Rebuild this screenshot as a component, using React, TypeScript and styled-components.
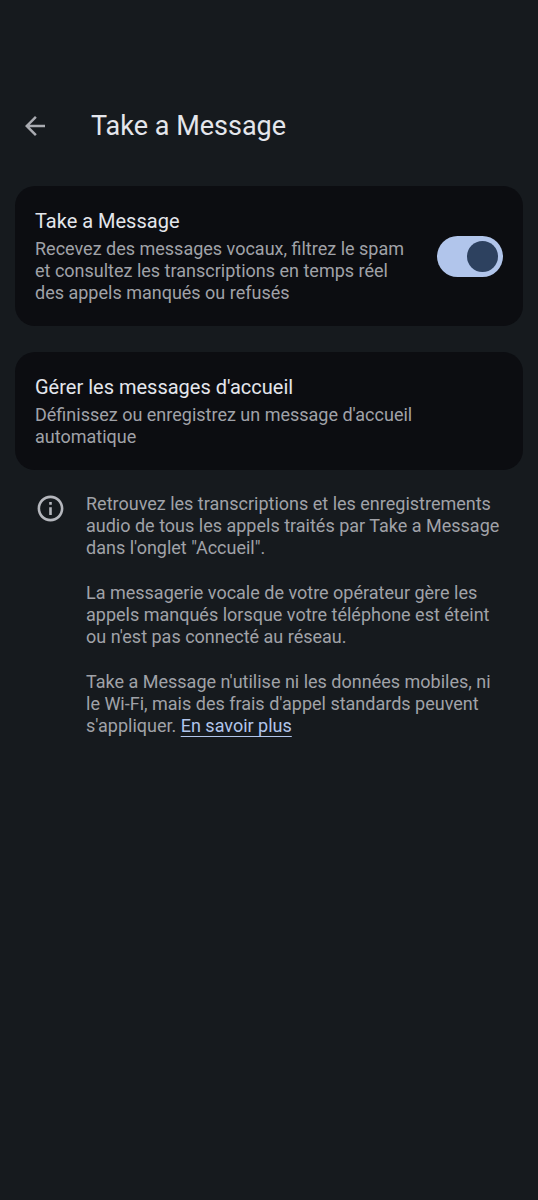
import React, { useState } from "react";
import styled, { createGlobalStyle } from "styled-components";

const GlobalStyle = createGlobalStyle`
  * { box-sizing: border-box; }
  body {
    margin: 0;
    background: #161a1e;
    color: #e4e6ec;
    font-family: Roboto, "Liberation Sans", sans-serif;
  }
`;

const Screen = styled.main`
  min-height: 100vh;
  padding: 102px 15px 24px;
`;

const TopBar = styled.header`
  display: flex;
  align-items: center;
  gap: 36px;
  height: 48px;
  margin-bottom: 36px;
`;

const BackButton = styled.button`
  display: flex;
  align-items: center;
  justify-content: center;
  width: 40px;
  height: 40px;
  padding: 0;
  border: 0;
  border-radius: 50%;
  background: none;
  color: #a9abb1;
  cursor: pointer;
`;

const PageTitle = styled.h1`
  margin: 0;
  font-size: 27px;
  line-height: 36px;
  font-weight: 400;
`;

const Card = styled.section`
  display: flex;
  align-items: center;
  gap: 24px;
  padding: 22px 20px;
  margin-bottom: 26px;
  border-radius: 20px;
  background: #0c0d11;
`;

const CardText = styled.div`
  flex: 1;
  min-width: 0;
`;

const CardTitle = styled.h2`
  display: block;
  margin: 0 0 4px;
  font-size: 20px;
  line-height: 26px;
  font-weight: 400;
`;

const Body = styled.p`
  margin: 0;
  font-size: 18px;
  line-height: 22px;
  color: #a0a2a8;
`;

const Switch = styled.input`
  appearance: none;
  display: flex;
  align-items: center;
  flex: none;
  width: 66px;
  height: 41px;
  margin: 0;
  padding: 5px;
  border-radius: 21px;
  background: #b1c5eb;
  cursor: pointer;

  &::before {
    content: "";
    width: 31px;
    height: 31px;
    border-radius: 50%;
    background: #2d415f;
  }

  &:checked {
    justify-content: flex-end;
  }
`;

const Info = styled.section`
  display: flex;
  gap: 20px;
  padding: 0 15px 0 20px;
  margin-top: -3px;
`;

const InfoIcon = styled.svg`
  flex: none;
  width: 31px;
  height: 31px;
  color: #b5b7bd;
`;

const InfoText = styled.div`
  display: flex;
  flex-direction: column;
  gap: 23px;
`;

const Link = styled.a`
  display: inline-block;
  color: #b1c5eb;
  text-decoration: underline;
  text-decoration-thickness: 1px;
  text-underline-offset: 4px;
`;

export default function App() {
  const [enabled, setEnabled] = useState(true);

  return (
    <>
      <GlobalStyle />
      <Screen>
        <TopBar>
          <BackButton type="button" aria-label="Retour">
            <svg width="30" height="30" viewBox="0 0 24 24" fill="currentColor" aria-hidden="true">
              <path d="M20 11H7.83l5.59-5.59L12 4l-8 8 8 8 1.41-1.41L7.83 13H20v-2z" />
            </svg>
          </BackButton>
          <PageTitle>Take a Message</PageTitle>
        </TopBar>

        <Card>
          <CardText>
            <CardTitle as="label" htmlFor="take-message">Take a Message</CardTitle>
            <Body id="take-message-help">
              Recevez des messages vocaux, filtrez le spam et consultez les
              transcriptions en temps réel des appels manqués ou refusés
            </Body>
          </CardText>
          <Switch
            id="take-message"
            type="checkbox"
            role="switch"
            aria-describedby="take-message-help"
            checked={enabled}
            onChange={(e) => setEnabled(e.target.checked)}
          />
        </Card>

        <Card>
          <CardText>
            <CardTitle>Gérer les messages d'accueil</CardTitle>
            <Body>Définissez ou enregistrez un message d'accueil automatique</Body>
          </CardText>
        </Card>

        <Info>
          <InfoIcon viewBox="0 0 24 24" fill="currentColor" aria-hidden="true">
            <path d="M11 7h2v2h-2zm0 4h2v6h-2zm1-9C6.48 2 2 6.48 2 12s4.48 10 10 10 10-4.48 10-10S17.52 2 12 2zm0 18c-4.41 0-8-3.59-8-8s3.59-8 8-8 8 3.59 8 8-3.59 8-8 8z" />
          </InfoIcon>
          <InfoText>
            <Body>
              Retrouvez les transcriptions et les enregistrements audio de tous
              les appels traités par Take a Message dans l'onglet "Accueil".
            </Body>
            <Body>
              La messagerie vocale de votre opérateur gère les appels manqués
              lorsque votre téléphone est éteint ou n'est pas connecté au réseau.
            </Body>
            <Body>
              Take a Message n'utilise ni les données mobiles, ni le Wi-Fi, mais
              des frais d'appel standards peuvent s'appliquer.{" "}
              <Link href="#en-savoir-plus">En savoir plus</Link>
            </Body>
          </InfoText>
        </Info>
      </Screen>
    </>
  );
}
